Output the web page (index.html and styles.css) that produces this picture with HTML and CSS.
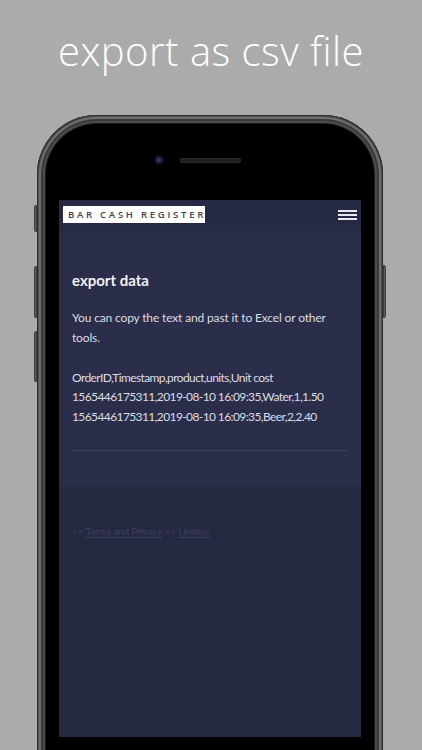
FILE: index.html
```html
<!DOCTYPE html>
<html lang="en">
<head>
<meta charset="utf-8">
<title>export as csv file</title>
<link rel="stylesheet" href="styles.css">
</head>
<body>
<div class="page">
  <h1 class="title">export as csv file</h1>
  <div class="phone">
    <span class="btn btn-mute"></span>
    <span class="btn btn-vol1"></span>
    <span class="btn btn-vol2"></span>
    <span class="btn btn-power"></span>
    <div class="bezel-top">
      <span class="camera"></span>
      <span class="speaker"></span>
    </div>
    <div class="screen">
      <header class="nav">
        <div class="logo">BAR CASH REGISTER</div>
        <div class="burger"><span></span><span></span><span></span></div>
      </header>
      <section class="content">
        <h2 class="heading">export data</h2>
        <p class="text">You can copy the text and past it to Excel or other tools.</p>
        <p class="text csv">OrderID,Timestamp,product,units,Unit cost<br>1565446175311,2019-08-10 16:09:35,Water,1,1.50<br>1565446175311,2019-08-10 16:09:35,Beer,2,2.40</p>
        <hr class="rule">
      </section>
      <footer class="footer">
        <span class="sep">&gt;&gt;</span> <a class="link" href="#">Terms and Privacy</a> <span class="sep">&gt;&gt;</span> <a class="link" href="#">License</a>
      </footer>
    </div>
  </div>
</div>
</body>
</html>
```
FILE: styles.css
```css
html, body {
  margin: 0;
  padding: 0;
}
body {
  background: #ababab;
  width: 422px;
  height: 750px;
  overflow: hidden;
}
.page {
  width: 422px;
  height: 750px;
  overflow: hidden;
}
.title {
  margin: 0;
  height: 115px;
  box-sizing: border-box;
  padding-top: 24px;
  font-family: "Open Sans", "DejaVu Sans", sans-serif;
  font-weight: 300;
  font-size: 40px;
  line-height: 54px;
  color: #ffffff;
  text-align: center;
  letter-spacing: 0.5px;
}
.phone {
  position: relative;
  margin-left: 37px;
  width: 346px;
  height: 650px;
  box-sizing: border-box;
  padding: 0 22px;
  background: #000;
  border-radius: 60px 60px 0 0;
  box-shadow:
    inset 0 0 0 1px #2e2e2e,
    inset 0 0 0 2px #505050,
    inset 0 0 0 4px #6e6e6e,
    inset 0 0 0 6px #3a3a3a,
    inset 0 0 0 8px #4c4c4c,
    inset 0 0 0 9px #1a1a1a;
}
.btn {
  position: absolute;
  width: 3px;
  background: #5e5e5e;
  border: 1px solid #3e3e3e;
  box-sizing: border-box;
}
.btn-mute { left: -3px; top: 90px; height: 27px; border-radius: 2px 0 0 2px; }
.btn-vol1 { left: -3px; top: 151px; height: 52px; border-radius: 2px 0 0 2px; }
.btn-vol2 { left: -3px; top: 216px; height: 51px; border-radius: 2px 0 0 2px; }
.btn-power { right: -3px; top: 150px; height: 53px; border-radius: 0 2px 2px 0; }
.bezel-top {
  height: 85px;
  display: flex;
  align-items: flex-start;
  padding-top: 41px;
  box-sizing: border-box;
  padding-left: 96px;
}
.camera {
  width: 8px;
  height: 8px;
  border-radius: 50%;
  background: radial-gradient(circle at 50% 50%, #2b3d66 0, #17203a 55%, #0a0d16 100%);
}
.speaker {
  margin-left: 17px;
  margin-top: 2px;
  width: 61px;
  height: 5px;
  border-radius: 3px;
  background: #1f1f1f;
  box-shadow: inset 0 0 0 1px #2a2a2a;
}
.screen {
  height: 537px;
  background: #242841;
  display: flex;
  flex-direction: column;
  font-family: "Lato", "Open Sans", sans-serif;
}
.nav {
  height: 31px;
  background: #252944;
  display: flex;
  align-items: flex-start;
  justify-content: space-between;
  padding: 6px 4px 0 4px;
  box-sizing: border-box;
}
.logo {
  height: 17px;
  width: 142px;
  box-sizing: border-box;
  background: #ffffff;
  color: #40434e;
  font-family: "Open Sans", sans-serif;
  font-weight: 600;
  font-size: 9.5px;
  letter-spacing: 2.75px;
  line-height: 17px;
  padding-left: 5px;
  white-space: nowrap;
  overflow: hidden;
}
.burger {
  width: 19px;
  display: flex;
  flex-direction: column;
  gap: 2px;
  margin-top: 4px;
}
.burger span {
  display: block;
  height: 2px;
  background: #e8e8ee;
}
.content {
  background: #2a2e4a;
  padding: 39px 13px 36px 13px;
}
.heading {
  margin: 0;
  font-size: 15px;
  font-weight: 700;
  line-height: 20px;
  color: #f2f2f4;
}
.text {
  margin: 17.5px 0 0 0;
  font-size: 12px;
  line-height: 20px;
  letter-spacing: -0.15px;
  color: #dcdde3;
}
.csv {
  margin-top: 20px;
  line-height: 19.5px;
  letter-spacing: -0.6px;
  white-space: nowrap;
}
.rule {
  margin: 24px 0 0 0;
  border: 0;
  height: 1px;
  background: #3a3f5d;
}
.footer {
  flex: 1;
  padding: 36px 13px 0 13px;
  font-size: 10px;
  line-height: 16px;
  letter-spacing: -0.15px;
  color: #3b4062;
}
.link {
  color: #3b4062;
  text-decoration: underline;
  text-underline-offset: 2px;
}
```
